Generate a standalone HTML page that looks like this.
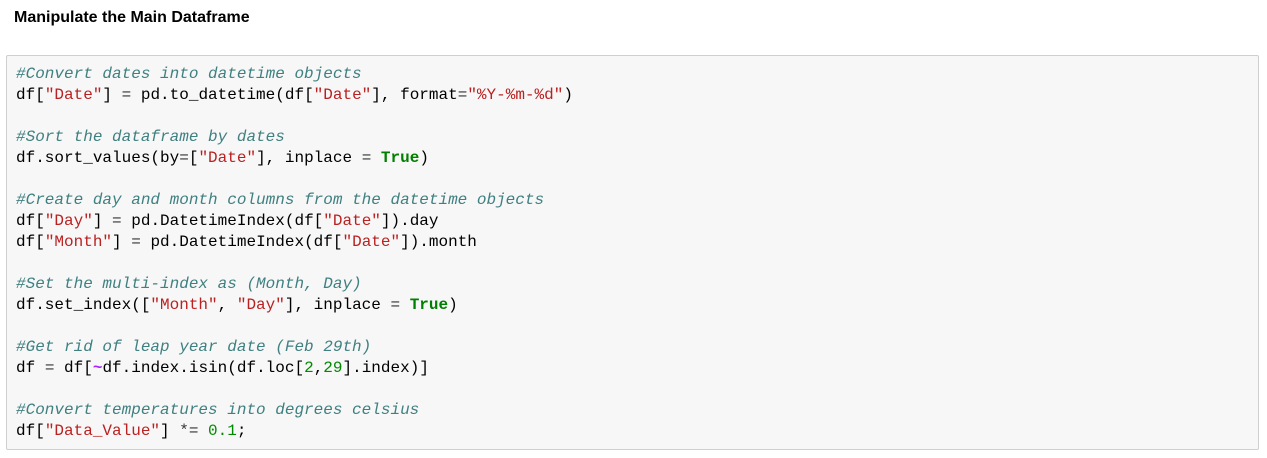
<!DOCTYPE html>
<html><head><style>
body{margin:0;background:#fff;width:1267px;height:458px;overflow:hidden}
h4{position:absolute;left:14px;top:9px;margin:0;font:bold 16px "Liberation Sans",Arial,sans-serif;color:#000}
.box{position:absolute;left:6px;top:55px;width:1251px;height:393px;background:#f7f7f7;border:1px solid #cfcfcf;border-radius:2px}
pre{position:absolute;left:9px;top:8px;margin:0;font:16px/21px "Liberation Mono","DejaVu Sans Mono",monospace;color:#000}
.c{color:#408080;font-style:italic}.s{color:#ba2121}.k{color:#008000;font-weight:bold}.o{color:#333}.n{color:#080}.p{color:#a2f;font-weight:bold}
</style></head><body>
<h4>Manipulate the Main Dataframe</h4>
<div class="box"><pre><span class="c">#Convert dates into datetime objects</span>
df[<span class="s">"Date"</span>] <span class="o">=</span> pd.to_datetime(df[<span class="s">"Date"</span>], format<span class="o">=</span><span class="s">"%Y-%m-%d"</span>)

<span class="c">#Sort the dataframe by dates</span>
df.sort_values(by<span class="o">=</span>[<span class="s">"Date"</span>], inplace <span class="o">=</span> <span class="k">True</span>)

<span class="c">#Create day and month columns from the datetime objects</span>
df[<span class="s">"Day"</span>] <span class="o">=</span> pd.DatetimeIndex(df[<span class="s">"Date"</span>]).day
df[<span class="s">"Month"</span>] <span class="o">=</span> pd.DatetimeIndex(df[<span class="s">"Date"</span>]).month

<span class="c">#Set the multi-index as (Month, Day)</span>
df.set_index([<span class="s">"Month"</span>, <span class="s">"Day"</span>], inplace <span class="o">=</span> <span class="k">True</span>)

<span class="c">#Get rid of leap year date (Feb 29th)</span>
df <span class="o">=</span> df[<span class="p">~</span>df.index.isin(df.loc[<span class="n">2</span>,<span class="n">29</span>].index)]

<span class="c">#Convert temperatures into degrees celsius</span>
df[<span class="s">"Data_Value"</span>] <span class="o">*=</span> <span class="n">0.1</span>;</pre></div>
</body></html>
